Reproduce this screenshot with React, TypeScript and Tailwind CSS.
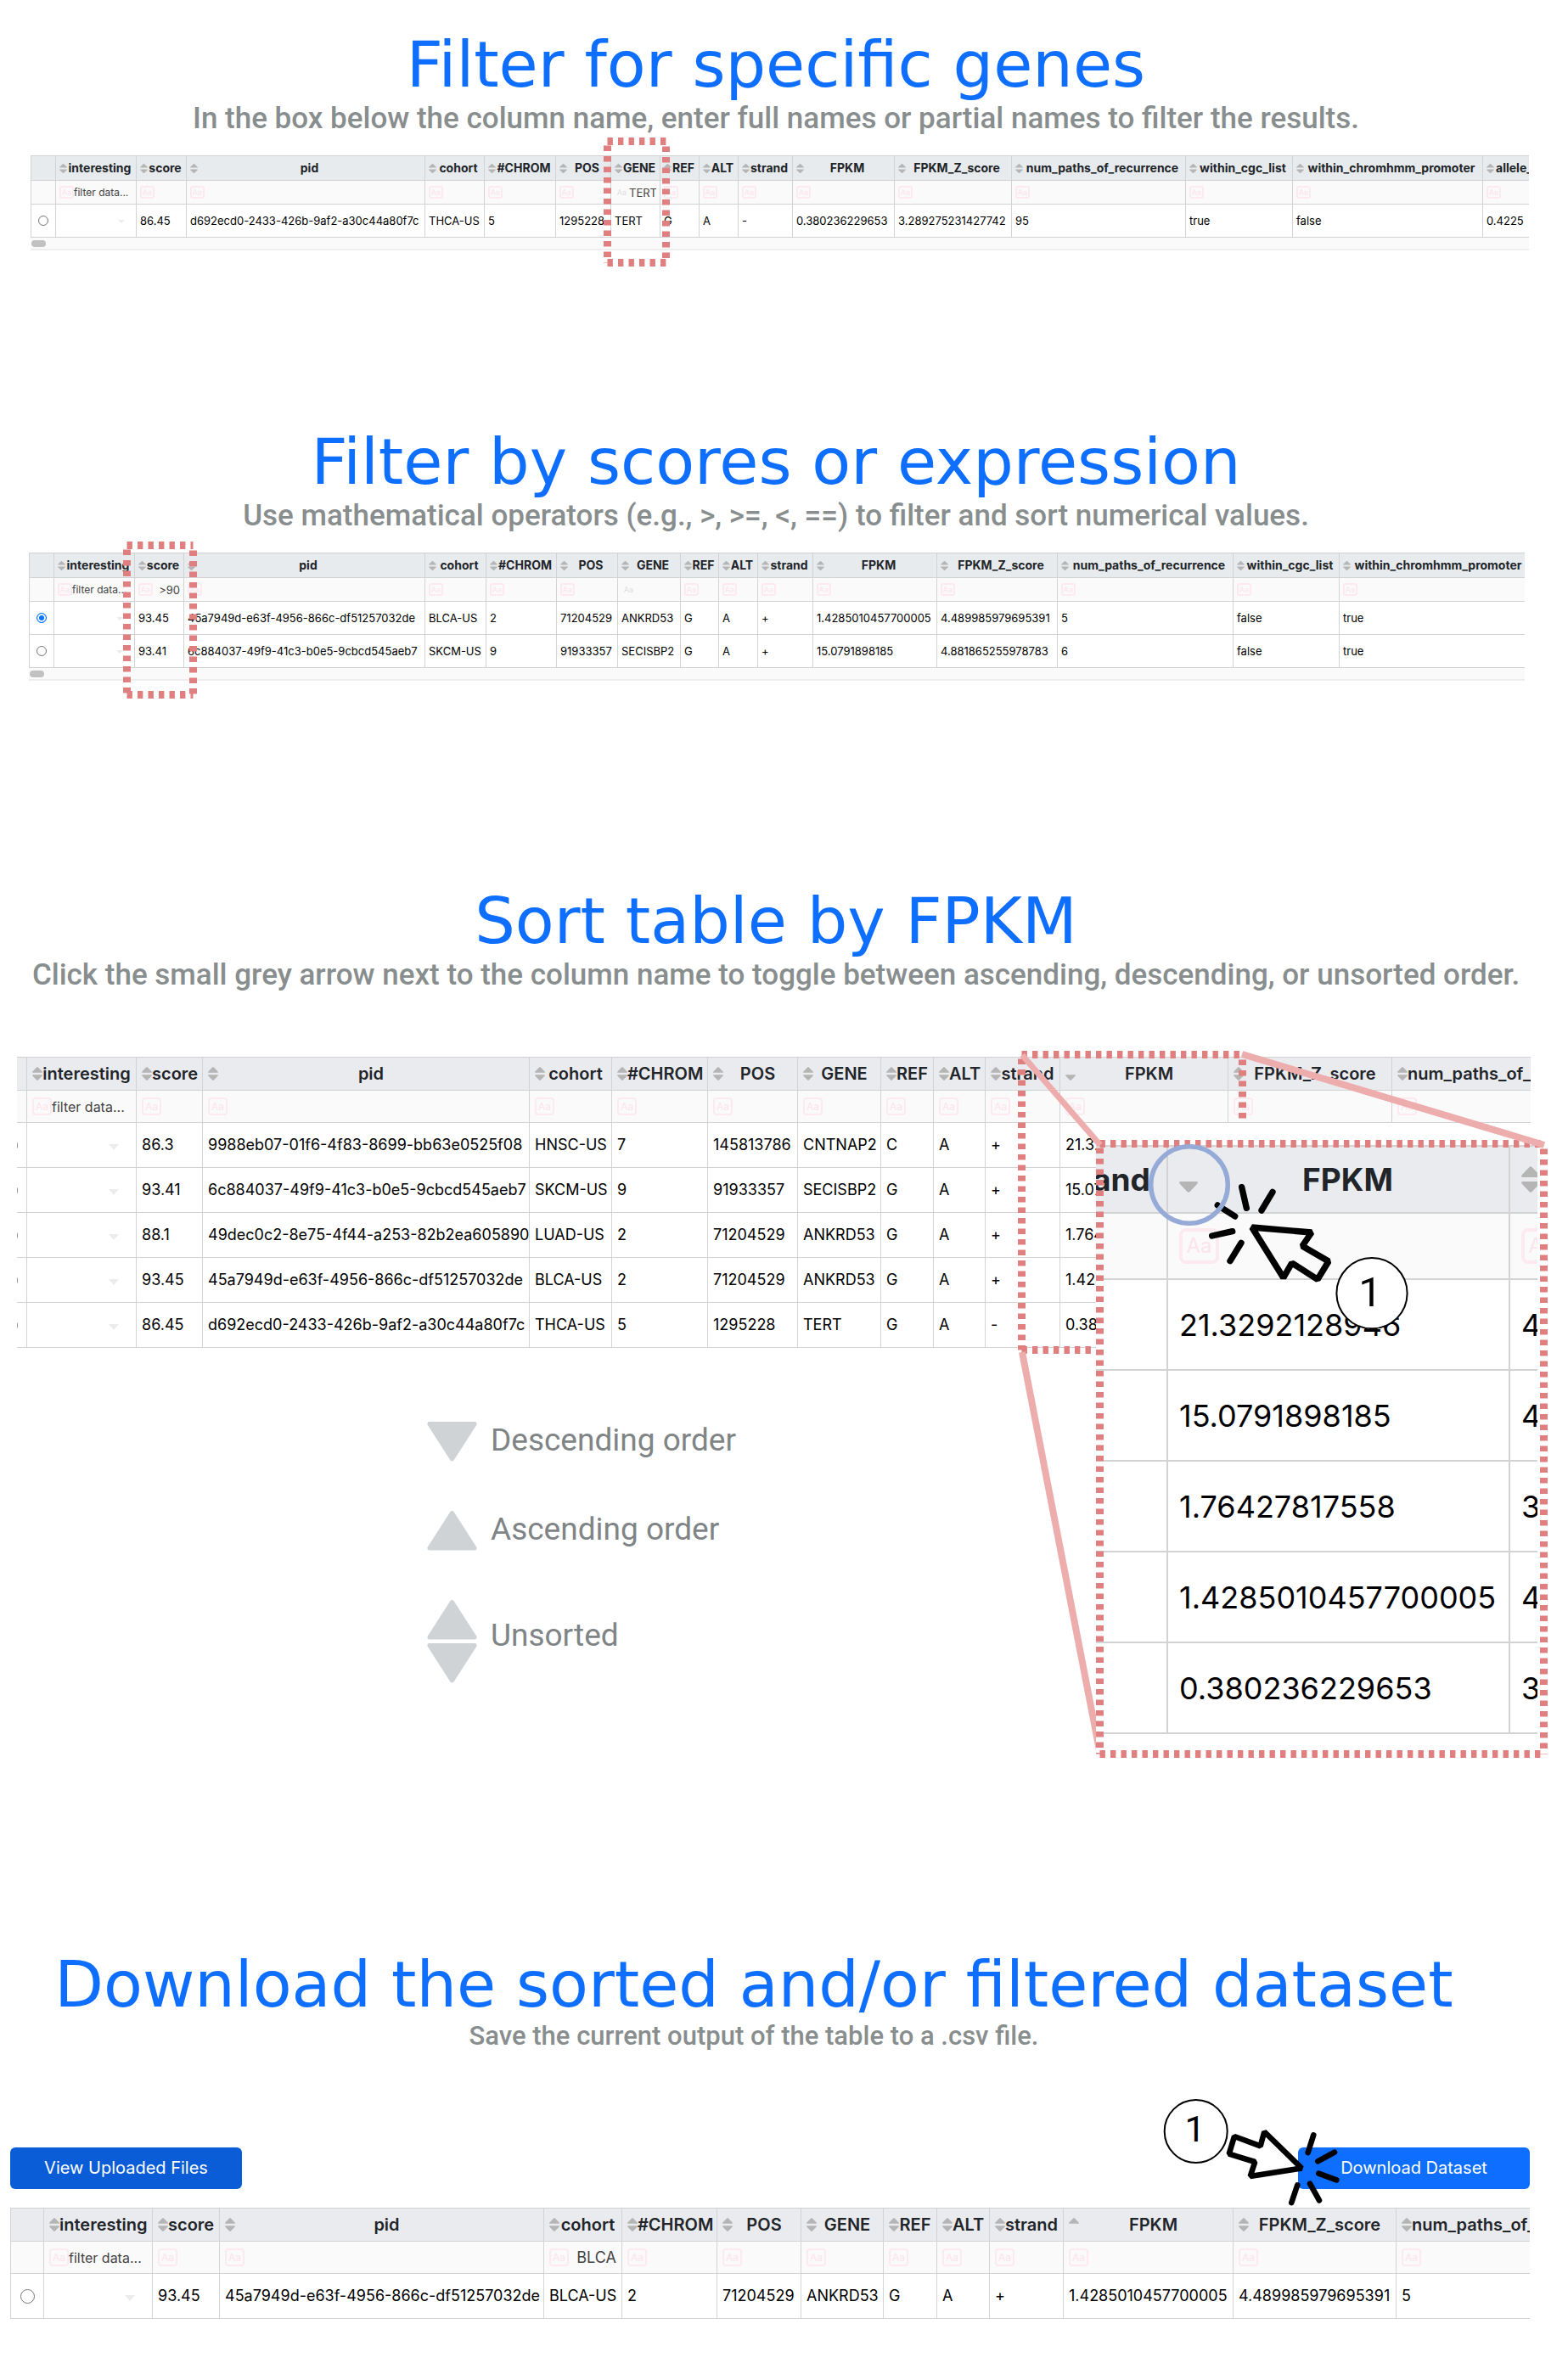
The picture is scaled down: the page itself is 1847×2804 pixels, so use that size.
import type { ReactNode } from 'react';

type Size = 'sm' | 'md' | 'lg';
type SortState = 'none' | 'asc' | 'desc';

interface Column {
  name: string;
  width: string;
  sort?: SortState;
  filter?: string;
  placeholder?: string;
  plainCase?: boolean;
}

const sizes = {
  sm: {
    head: 'h-[29px] bg-[#e8ebee] text-[14px] leading-5 font-bold',
    filterRow: 'h-[28px]',
    cell: 'h-[39px] px-[4px] text-[13px] leading-4',
    pad: 'px-[4px]',
    sortIcon: 'h-[11px] w-[9px]',
    caseBox: 'h-[15px] w-[17px] rounded-[3px] border-2 text-[9px] leading-[11px]',
    placeholder: 'text-[12px] leading-4',
    value: 'text-[13px] leading-4',
    radio: 'size-3',
    caret: 'h-1 w-2 right-[16px]',
    line: 'border',
  },
  md: {
    head: 'h-[39px] bg-[#eaebef] text-[20px] leading-6 font-semibold',
    filterRow: 'h-[38px]',
    cell: 'h-[53px] px-[6px] text-[18px] leading-6',
    pad: 'px-[6px]',
    sortIcon: 'h-[16px] w-[12px]',
    caseBox: 'h-[21px] w-[23px] rounded-[4px] border-2 text-[12px] leading-[17px]',
    placeholder: 'text-[16px] leading-6',
    value: 'text-[18px] leading-6',
    radio: 'size-[17px]',
    caret: 'h-[7px] w-[12px] right-[21px]',
    line: 'border',
  },
  lg: {
    head: 'h-[79px] bg-[#eaebef] text-[37px] leading-10 font-bold',
    filterRow: 'h-[78px]',
    cell: 'h-[107px] px-[13px] text-[36px] leading-10',
    pad: 'px-[13px]',
    sortIcon: 'h-[31px] w-[22px]',
    caseBox: 'h-[42px] w-[47px] rounded-[8px] border-4 text-[24px] leading-[34px]',
    placeholder: 'text-[32px] leading-10',
    value: 'text-[36px] leading-10',
    radio: 'size-8',
    caret: 'h-3 w-6 right-10',
    line: 'border-2',
  },
};

const lineColor = 'border-[#d3d3d3]';

function SortIcon({ state, className }: { state: SortState; className: string }) {
  return (
    <svg viewBox="0 0 22 31" preserveAspectRatio="none" className={className} fill="#b5b5b5" aria-hidden="true">
      {state !== 'desc' && <path d="M9.5 1 Q11 -0.6 12.5 1 L21.5 10.5 Q22.5 13 20.5 13 H1.5 Q-0.5 13 0.5 10.5 Z" />}
      {state !== 'asc' && <path d="M9.5 30 Q11 31.6 12.5 30 L21.5 20.5 Q22.5 18 20.5 18 H1.5 Q-0.5 18 0.5 20.5 Z" />}
    </svg>
  );
}

interface GridProps {
  id: string;
  size: Size;
  columns: Column[];
  rows: string[][];
  selected?: number;
  selectable?: boolean;
}

function DataGrid({ id, size, columns, rows, selected, selectable = true }: GridProps) {
  const s = sizes[size];
  const border = `${s.line} ${lineColor}`;
  return (
    <table className="w-full table-fixed border-collapse font-['Inter',sans-serif] whitespace-nowrap text-black">
      <colgroup>
        {selectable && <col className={size === 'sm' ? 'w-[29px]' : 'w-[39px]'} />}
        {columns.map((c) => (
          <col key={c.name} className={c.width} />
        ))}
      </colgroup>
      <thead>
        <tr>
          {selectable && <th className={`${border} ${s.head} p-0`} />}
          {columns.map((c) => (
            <th key={c.name} scope="col" className={`${border} ${s.head} ${s.pad} py-0 text-[#212529]`}>
              <div className="flex items-center">
                <button type="button" aria-label={`Sort by ${c.name}`} className="shrink-0">
                  <SortIcon state={c.sort ?? 'none'} className={s.sortIcon} />
                </button>
                <span className="flex-1 text-center">{c.name}</span>
              </div>
            </th>
          ))}
        </tr>
        <tr className="bg-[#fafafa]">
          {selectable && <td className={`${border} p-0`} />}
          {columns.map((c) => (
            <td key={c.name} className={`${border} ${s.filterRow} ${s.pad} py-0`}>
              <div className="flex items-center">
                <button
                  type="button"
                  aria-label={`Toggle case sensitivity for ${c.name}`}
                  className={`${s.caseBox} shrink-0 text-center ${c.plainCase ? 'border-transparent text-[#dedede]' : 'border-[#fde9f0] text-[#fde3ec]'}`}
                >
                  Aa
                </button>
                <input
                  type="text"
                  aria-label={`Filter ${c.name}`}
                  defaultValue={c.filter}
                  placeholder={c.placeholder}
                  className={`w-0 min-w-0 flex-1 bg-transparent text-[#444] outline-none placeholder:text-[#444] ${c.placeholder ? `${s.placeholder} text-left` : `${s.value} text-right`}`}
                />
              </div>
            </td>
          ))}
        </tr>
      </thead>
      <tbody>
        {rows.map((row, r) => (
          <tr key={r} className="bg-white">
            {selectable && (
              <td className={`${border} p-0`}>
                <div className="flex justify-center">
                  <input
                    type="radio"
                    name={id}
                    aria-label={`Select row ${r + 1}`}
                    defaultChecked={selected === r}
                    className={`${s.radio} appearance-none rounded-full border border-[#767676] bg-white checked:border-[#0b75ff] checked:bg-[#0b75ff] checked:shadow-[inset_0_0_0_2px_white]`}
                  />
                </div>
              </td>
            )}
            {row.map((value, i) => (
              <td key={i} className={`${border} ${s.cell} py-0`}>
                {columns[i].name === 'interesting' ? (
                  <div className="relative">
                    <select aria-label={`Interesting, row ${r + 1}`} className="block w-full appearance-none bg-transparent outline-none">
                      <option value="" />
                    </select>
                    <svg viewBox="0 0 12 7" preserveAspectRatio="none" className={`${s.caret} pointer-events-none absolute top-1/2 -mr-[7px] -translate-y-px`} fill="#ececec" aria-hidden="true">
                      <path d="M0 0 H12 L6 7 Z" />
                    </svg>
                  </div>
                ) : (
                  value
                )}
              </td>
            ))}
          </tr>
        ))}
      </tbody>
    </table>
  );
}

function ScrollTrack() {
  return (
    <div className="flex h-[15px] items-center border-b-2 border-[#eeeeee] bg-[#fafafa] pl-px">
      <div className="h-2 w-[17px] rounded-[4px] bg-[#c1c1c1]" />
    </div>
  );
}

/* Dotted highlight frame; w and h are measured between stroke centres. */
function DottedFrame({ w, h, className }: { w: number; h: number; className: string }) {
  return (
    <svg width={w + 9} height={h + 9} viewBox={`-4.5 -4.5 ${w + 9} ${h + 9}`} className={`pointer-events-none absolute ${className}`} stroke="#e07f80" strokeWidth="9" strokeDasharray="6.4 6.1" aria-hidden="true">
      <path d={`M0 0 H${w}`} />
      <path d={`M0 ${h} H${w}`} />
      <path d={`M0 5 V${h}`} />
      <path d={`M${w} 6 V${h}`} />
    </svg>
  );
}

function Intro({ title, children, small }: { title: string; children: ReactNode; small?: boolean }) {
  return (
    <header className={`text-center whitespace-nowrap ${small ? 'pr-[71px]' : 'pr-[19px]'}`}>
      <h2 className="font-['DejaVu_Sans',sans-serif] text-[75px] leading-[80px] text-[#0d6eff]">{title}</h2>
      <p className={`font-['Roboto',sans-serif] font-medium text-[#888d8e] ${small ? 'text-[31px] leading-[42px]' : 'text-[35px] leading-[48px]'}`}>{children}</p>
    </header>
  );
}

const geneColumns: Column[] = [
  { name: 'interesting', width: 'w-[95px]', placeholder: 'filter data...' },
  { name: 'score', width: 'w-[59px]' },
  { name: 'pid', width: 'w-[281px]' },
  { name: 'cohort', width: 'w-[70px]' },
  { name: '#CHROM', width: 'w-[84px]' },
  { name: 'POS', width: 'w-[65px]' },
  { name: 'GENE', width: 'w-[58px]', filter: 'TERT', plainCase: true },
  { name: 'REF', width: 'w-[46px]' },
  { name: 'ALT', width: 'w-[46px]' },
  { name: 'strand', width: 'w-[64px]' },
  { name: 'FPKM', width: 'w-[120px]' },
  { name: 'FPKM_Z_score', width: 'w-[138px]' },
  { name: 'num_paths_of_recurrence', width: 'w-[205px]' },
  { name: 'within_cgc_list', width: 'w-[126px]' },
  { name: 'within_chromhmm_promoter', width: 'w-[224px]' },
  { name: 'allele_', width: 'w-[65px]' },
];

const scoreColumns: Column[] = [
  { name: 'interesting', width: 'w-[95px]', placeholder: 'filter data...' },
  { name: 'score', width: 'w-[58px]', filter: '>90' },
  { name: 'pid', width: 'w-[284px]' },
  { name: 'cohort', width: 'w-[72px]' },
  { name: '#CHROM', width: 'w-[83px]' },
  { name: 'POS', width: 'w-[72px]' },
  { name: 'GENE', width: 'w-[74px]', plainCase: true },
  { name: 'REF', width: 'w-[45px]' },
  { name: 'ALT', width: 'w-[46px]' },
  { name: 'strand', width: 'w-[65px]' },
  { name: 'FPKM', width: 'w-[146px]' },
  { name: 'FPKM_Z_score', width: 'w-[142px]' },
  { name: 'num_paths_of_recurrence', width: 'w-[207px]' },
  { name: 'within_cgc_list', width: 'w-[125px]' },
  { name: 'within_chromhmm_promoter', width: 'w-[224px]' },
];

const sortColumns: Column[] = [
  { name: 'interesting', width: 'w-[129px]', placeholder: 'filter data...' },
  { name: 'score', width: 'w-[78px]' },
  { name: 'pid', width: 'w-[385px]' },
  { name: 'cohort', width: 'w-[97px]' },
  { name: '#CHROM', width: 'w-[113px]' },
  { name: 'POS', width: 'w-[106px]' },
  { name: 'GENE', width: 'w-[98px]' },
  { name: 'REF', width: 'w-[62px]' },
  { name: 'ALT', width: 'w-[61px]' },
  { name: 'strand', width: 'w-[88px]' },
  { name: 'FPKM', width: 'w-[198px]', sort: 'desc' },
  { name: 'FPKM_Z_score', width: 'w-[193px]' },
  { name: 'num_paths_of_recurrence', width: 'w-[276px]' },
];

const downloadColumns: Column[] = [
  { name: 'interesting', width: 'w-[128px]', placeholder: 'filter data...' },
  { name: 'score', width: 'w-[79px]' },
  { name: 'pid', width: 'w-[382px]' },
  { name: 'cohort', width: 'w-[92px]', filter: 'BLCA' },
  { name: '#CHROM', width: 'w-[112px]' },
  { name: 'POS', width: 'w-[99px]' },
  { name: 'GENE', width: 'w-[97px]' },
  { name: 'REF', width: 'w-[63px]' },
  { name: 'ALT', width: 'w-[62px]' },
  { name: 'strand', width: 'w-[87px]' },
  { name: 'FPKM', width: 'w-[200px]', sort: 'asc' },
  { name: 'FPKM_Z_score', width: 'w-[192px]' },
  { name: 'num_paths_of_recurrence', width: 'w-[276px]' },
];

const insetColumns: Column[] = [
  { name: 'strand', width: 'w-[179px]' },
  { name: 'FPKM', width: 'w-[403px]', sort: 'desc' },
  { name: ' ', width: 'w-[64px]' },
];

const legend: { label: string; state: SortState }[] = [
  { label: 'Descending order', state: 'desc' },
  { label: 'Ascending order', state: 'asc' },
  { label: 'Unsorted', state: 'none' },
];

function LegendTriangles({ state }: { state: SortState }) {
  const up = 'M27.5 1 Q29.5 -1 31.5 1 L58.5 43 Q59 46.5 56.5 46.5 H2.5 Q0 46.5 0.5 43 Z';
  const down = 'M27.5 45.5 Q29.5 47.5 31.5 45.5 L58.5 3.5 Q59 0 56.5 0 H2.5 Q0 0 0.5 3.5 Z';
  const both = state === 'none';
  return (
    <svg width="59" height={both ? 98 : 47} viewBox={both ? '0 0 59 98' : '0 0 59 47'} fill="#cfd3d6" className="shrink-0" aria-hidden="true">
      {state !== 'desc' && <path d={up} />}
      {state !== 'asc' && <path d={down} transform={both ? 'translate(0 51)' : undefined} />}
    </svg>
  );
}

export default function App() {
  return (
    <main className="overflow-hidden bg-white pt-9 pb-[74px]">
      <section>
        <Intro title="Filter for specific genes">
          In the box below the column name, enter full names or partial names to filter the results.
        </Intro>
        <div className="relative mt-[19px] pr-[46px] pl-9">
          <div className="overflow-hidden">
            <DataGrid
              id="genes"
              size="sm"
              columns={geneColumns}
              rows={[['', '86.45', 'd692ecd0-2433-426b-9af2-a30c44a80f7c', 'THCA-US', '5', '1295228', 'TERT', 'G', 'A', '-', '0.380236229653', '3.289275231427742', '95', 'true', 'false', '0.4225']]}
            />
          </div>
          <ScrollTrack />
          <DottedFrame w={69} h={143} className="-top-[21px] left-[711px]" />
        </div>
      </section>

      <section className="mt-[209px]">
        <Intro title="Filter by scores or expression">
          Use mathematical operators (e.g., &gt;, &gt;=, &lt;, ==) to filter and sort numerical values.
        </Intro>
        <div className="relative mt-[19px] pr-[51px] pl-[34px]">
          <div className="overflow-hidden">
            <DataGrid
              id="scores"
              size="sm"
              selected={0}
              columns={scoreColumns}
              rows={[
                ['', '93.45', '45a7949d-e63f-4956-866c-df51257032de', 'BLCA-US', '2', '71204529', 'ANKRD53', 'G', 'A', '+', '1.4285010457700005', '4.489985979695391', '5', 'false', 'true'],
                ['', '93.41', '6c884037-49f9-41c3-b0e5-9cbcd545aeb7', 'SKCM-US', '9', '91933357', 'SECISBP2', 'G', 'A', '+', '15.0791898185', '4.881865255978783', '6', 'false', 'true'],
              ]}
            />
          </div>
          <ScrollTrack />
          <DottedFrame w={78} h={176} className="-top-[13px] left-[145px]" />
        </div>
      </section>

      <section className="mt-[243px]">
        <Intro title="Sort table by FPKM">
          Click the small grey arrow next to the column name to toggle between ascending, descending, or unsorted order.
        </Intro>
        <div className="relative mt-[72px]">
          <div className="pr-[44px] pl-5">
            <div className="overflow-hidden">
              <div className="-ml-7">
                <DataGrid
                  id="sorting"
                  size="md"
                  columns={sortColumns}
                  rows={[
                    ['', '86.3', '9988eb07-01f6-4f83-8699-bb63e0525f08', 'HNSC-US', '7', '145813786', 'CNTNAP2', 'C', 'A', '+', '21.3292128946', '', ''],
                    ['', '93.41', '6c884037-49f9-41c3-b0e5-9cbcd545aeb7', 'SKCM-US', '9', '91933357', 'SECISBP2', 'G', 'A', '+', '15.0791898185', '', ''],
                    ['', '88.1', '49dec0c2-8e75-4f44-a253-82b2ea605890', 'LUAD-US', '2', '71204529', 'ANKRD53', 'G', 'A', '+', '1.76427817558', '', ''],
                    ['', '93.45', '45a7949d-e63f-4956-866c-df51257032de', 'BLCA-US', '2', '71204529', 'ANKRD53', 'G', 'A', '+', '1.4285010457700005', '', ''],
                    ['', '86.45', 'd692ecd0-2433-426b-9af2-a30c44a80f7c', 'THCA-US', '5', '1295228', 'TERT', 'G', 'A', '-', '0.380236229653', '', ''],
                  ]}
                />
              </div>
            </div>
          </div>

          <DottedFrame w={260} h={348} className="-top-[7px] left-[1199px]" />
          <svg width="110" height="490" viewBox="0 0 110 490" className="pointer-events-none absolute top-[345px] left-[1195px]" aria-hidden="true">
            <path d="M9 3 L101 477" stroke="#eeadad" strokeWidth="8" />
          </svg>

          {/* Magnified part of the FPKM column */}
          <div className="absolute top-[78px] left-[1291px] w-[533px] bg-white pt-[26px] pb-[30px]">
            <div className="mr-[13px] overflow-hidden">
              <div className="-ml-24">
                <DataGrid
                  id="inset"
                  size="lg"
                  selectable={false}
                  columns={insetColumns}
                  rows={[
                    ['', '21.3292128946', '4'],
                    ['', '15.0791898185', '4'],
                    ['', '1.76427817558', '3'],
                    ['', '1.4285010457700005', '4'],
                    ['', '0.380236229653', '3'],
                  ]}
                />
              </div>
            </div>
            <DottedFrame w={523} h={719} className="top-5 left-0" />
          </div>

          <svg width="660" height="380" viewBox="1190 1235 660 380" className="pointer-events-none absolute -top-[10px] left-[1190px]" fill="none" aria-hidden="true">
            <path d="M1204 1243 L1296 1349" stroke="#eeadad" strokeWidth="7" />
            <path d="M1463 1242 L1819 1349" stroke="#eeadad" strokeWidth="8" />
            <g stroke="#000" strokeWidth="7.4" strokeLinecap="round">
              <path d="M1474.7 1446 L1545 1452 L1534 1468 L1565 1486 L1552 1507.3 L1521.7 1488 L1511.7 1505.3 Z" strokeLinejoin="bevel" />
              <path d="M1462.7 1398.7 L1468.3 1423.3 M1499 1404.3 L1486 1426 M1434.3 1420 L1454.7 1433 M1427.7 1456 L1451.7 1450.7 M1462 1464.3 L1449 1485.7" />
            </g>
            <circle cx="1401" cy="1396" r="45.3" stroke="#95aad6" strokeWidth="5.5" />
            <circle cx="1616" cy="1523.7" r="41.6" fill="#fff" stroke="#000" strokeWidth="2" />
            <text x="1614" y="1538.5" textAnchor="middle" fontFamily="Roboto, sans-serif" fontSize="49" fill="#000">1</text>
          </svg>
        </div>

        <ul className="mt-[87px] flex flex-col gap-[58px] pl-[503px] font-['Roboto',sans-serif] text-[37px] leading-[44px] text-[#7f8586]">
          {legend.map((item) => (
            <li key={item.label} className="flex items-start gap-4">
              <LegendTriangles state={item.state} />
              <span className={item.state === 'none' ? 'pt-5' : ''}>{item.label}</span>
            </li>
          ))}
        </ul>
      </section>

      <section className="mt-[315px]">
        <Intro title="Download the sorted and/or filtered dataset" small>
          Save the current output of the table to a .csv file.
        </Intro>
        <div className="relative mt-[110px] pr-[45px] pl-3">
          <div className="mb-[22px] flex justify-between font-['Inter',sans-serif] text-[20px] leading-[49px] text-white">
            <button type="button" className="w-[273px] rounded-[6px] bg-[#0a5dd6]">View Uploaded Files</button>
            <button type="button" className="w-[273px] rounded-[6px] bg-[#0d6eff]">Download Dataset</button>
          </div>
          <div className="overflow-hidden">
            <DataGrid
              id="download"
              size="md"
              columns={downloadColumns}
              rows={[['', '93.45', '45a7949d-e63f-4956-866c-df51257032de', 'BLCA-US', '2', '71204529', 'ANKRD53', 'G', 'A', '+', '1.4285010457700005', '4.489985979695391', '5']]}
            />
          </div>
          <svg width="240" height="150" viewBox="0 0 240 150" className="pointer-events-none absolute -top-[69px] right-[247px]" fill="none" aria-hidden="true">
            <g stroke="#000" strokeWidth="6.6" strokeLinecap="round">
              <path d="M173.3 93.5 L129.3 50.5 L124.7 67.3 L94 56 L87.7 76.7 L118.3 86 L112.7 103 Z" strokeLinejoin="bevel" />
              <path d="M187.3 54.3 L180.7 75 M212 74.7 L192.3 85.3 M193.3 99.7 L214.3 107.3 M183 111.7 L194 131.3 M168.3 113.3 L161.3 134" />
            </g>
            <circle cx="48.7" cy="50" r="37" fill="#fff" stroke="#000" strokeWidth="2" />
            <text x="47.5" y="62" textAnchor="middle" fontFamily="Roboto, sans-serif" fontSize="43" fill="#000">1</text>
          </svg>
        </div>
      </section>
    </main>
  );
}
